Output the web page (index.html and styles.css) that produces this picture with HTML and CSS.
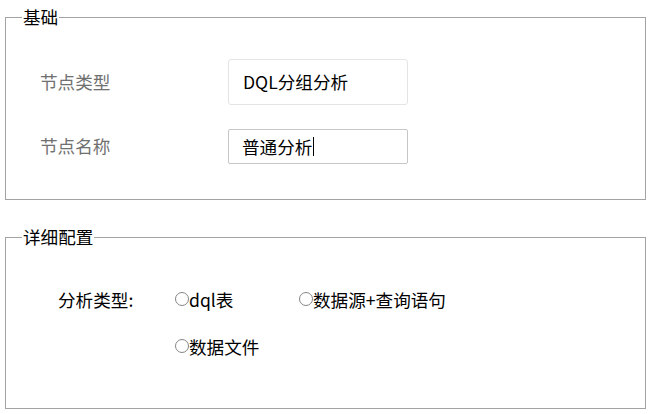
FILE: index.html
```html
<!DOCTYPE html>
<html lang="zh-CN">
<head>
<meta charset="utf-8">
<title>节点配置</title>
<link rel="stylesheet" href="styles.css">
</head>
<body>
  <fieldset class="group group-basic">
    <legend class="group-title">基础</legend>
    <div class="form-row">
      <span class="form-label">节点类型</span>
      <div class="field field-readonly">DQL分组分析</div>
    </div>
    <div class="form-row">
      <span class="form-label">节点名称</span>
      <div class="field field-input">普通分析<span class="caret"></span></div>
    </div>
  </fieldset>

  <fieldset class="group group-detail">
    <legend class="group-title">详细配置</legend>
    <div class="detail-row">
      <span class="detail-label">分析类型:</span>
      <div class="radio-grid">
        <label class="radio"><input type="radio" name="atype" class="radio-dot">dql表</label>
        <label class="radio"><input type="radio" name="atype" class="radio-dot">数据源+查询语句</label>
        <label class="radio"><input type="radio" name="atype" class="radio-dot">数据文件</label>
      </div>
    </div>
  </fieldset>
</body>
</html>
```

FILE: styles.css
```css
html, body {
  margin: 0;
  padding: 0;
  background: #ffffff;
}

body {
  font-family: "Noto Sans CJK SC", "Noto Sans", sans-serif;
  font-size: 17.6px;
  line-height: 22px;
  color: #000;
}

.group {
  margin: 0 4px 0 5px;
  padding: 0 0 0 16px;
  border: 1px solid #a3a3a3;
  min-width: 0;
}

.group-basic {
  margin-top: 6px;
  padding-top: 31px;
  padding-bottom: 35px;
}

.group-detail {
  margin-top: 26px;
  padding-top: 40px;
  padding-bottom: 49px;
}

.group-title {
  padding: 0 1px;
  margin: 0;
  font-size: 17.6px;
  line-height: 22px;
  color: #000;
}

.form-row {
  display: flex;
  align-items: center;
  padding-left: 18px;
}

.form-row + .form-row {
  margin-top: 24px;
}

.form-label {
  width: 188px;
  flex: none;
  color: #707070;
  margin-top: -1px;
}

.field {
  box-sizing: border-box;
  width: 180px;
  display: flex;
  align-items: center;
  padding-left: 14px;
  background: #fff;
}

.field-readonly {
  height: 46px;
  border: 1px solid #e4e4e4;
  border-radius: 3px;
}

.field-input {
  height: 35px;
  border: 1px solid #c6c6c6;
  border-radius: 2px;
  padding-left: 13px;
}

.caret {
  display: inline-block;
  width: 1px;
  height: 19px;
  background: #000;
  margin-left: 1px;
}

.detail-row {
  display: flex;
  align-items: flex-start;
  padding-left: 36px;
}

.detail-label {
  width: 117px;
  flex: none;
  line-height: 24px;
}

.radio-grid {
  display: grid;
  grid-template-columns: 124px auto;
  row-gap: 23px;
}

.radio {
  display: flex;
  align-items: center;
  line-height: 24px;
  white-space: nowrap;
}

.radio-dot {
  appearance: none;
  -webkit-appearance: none;
  box-sizing: border-box;
  width: 14px;
  height: 14px;
  margin: -2px 0 0 0;
  border: 1px solid #858585;
  border-radius: 50%;
  background: #fff;
  flex: none;
}
```
